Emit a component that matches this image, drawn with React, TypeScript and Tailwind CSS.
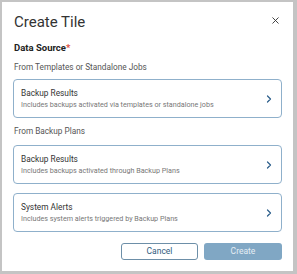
import { X, ChevronRight } from 'lucide-react'

const Option = ({ title, desc }: { title: string; desc: string }) => (
  <button className="flex h-[39px] w-full items-center justify-between rounded-[4px] border border-[#8fb0cb] bg-white pl-[7px] pr-[6px] text-left">
    <div className="flex flex-col gap-[1px]">
      <span className="text-[8.3px] leading-[12px] text-[#333]">{title}</span>
      <span className="text-[7.2px] leading-[10px] text-[#777]">{desc}</span>
    </div>
    <ChevronRight className="h-[12px] w-[12px] text-[#2a5d8a]" strokeWidth={2.4} />
  </button>
)

export default function App() {
  return (
    <div className="h-[274px] w-[297px] bg-[#c4c4c4] pl-[2px] pt-[2px] font-['Roboto',sans-serif]">
      <div className="flex h-[269px] w-[291px] flex-col bg-white px-[11px]">
        <div className="flex items-center justify-between pt-[11px]">
          <h1 className="ml-[1px] text-[15px] leading-[18px] text-[#333]">Create Tile</h1>
          <X className="mr-[1px] mt-[-3px] h-[11px] w-[11px] text-[#333]" strokeWidth={2} />
        </div>
        <p className="ml-[1px] mt-[11px] text-[9.5px] font-bold leading-[12px] text-[#222]">
          Data Source<span className="text-[#e0523e]">*</span>
        </p>
        <p className="ml-[1px] mt-[8px] text-[8.25px] leading-[11px] text-[#555]">From Templates or Standalone Jobs</p>
        <div className="mt-[6px]">
          <Option title="Backup Results" desc="Includes backups activated via templates or standalone jobs" />
        </div>
        <p className="ml-[1px] mt-[8px] text-[8.25px] leading-[11px] text-[#555]">From Backup Plans</p>
        <div className="mt-[8px] flex flex-col gap-[9px]">
          <Option title="Backup Results" desc="Includes backups activated through Backup Plans" />
          <Option title="System Alerts" desc="Includes system alerts triggered by Backup Plans" />
        </div>
        <div className="mt-[11px] flex justify-end gap-[6px]">
          <button className="h-[17px] w-[77px] rounded-[3px] border border-[#6d8fa8] text-[8.5px] text-[#2f5b7e]">
            Cancel
          </button>
          <button className="h-[17px] w-[78px] rounded-[3px] bg-[#80a7c4] text-[8.5px] text-[#e6eef4]">
            Create
          </button>
        </div>
      </div>
    </div>
  )
}
